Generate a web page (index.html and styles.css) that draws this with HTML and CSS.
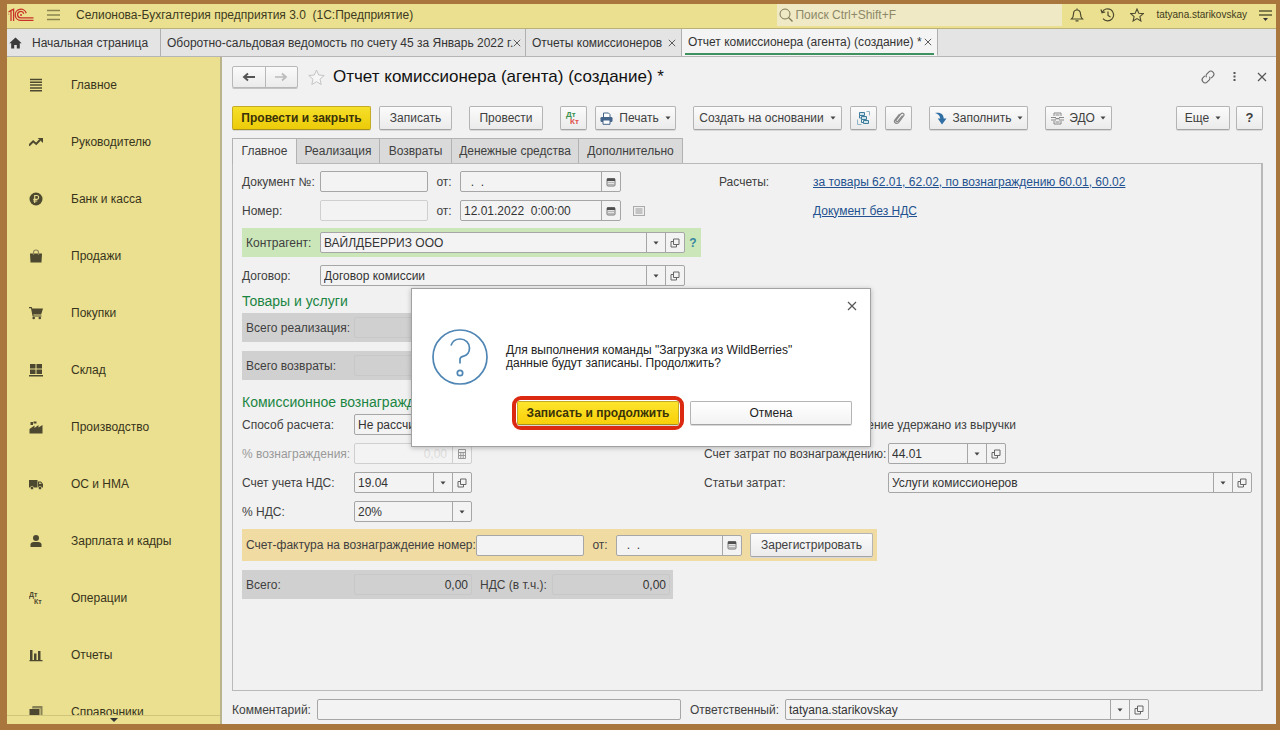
FILE: index.html
```
<!DOCTYPE html>
<html lang="ru">
<head>
<meta charset="utf-8">
<title>Отчет комиссионера (агента) (создание) *</title>
<link rel="stylesheet" href="styles.css">
</head>
<body>
<svg class="sprite" aria-hidden="true">
  <symbol id="i-open" viewBox="0 0 10 10"><path d="M3.500 1H9v5.500H3.500zM3.500 3.500H1V9h5.500V6.500" fill="none" stroke="#666" stroke-width="1"/></symbol>
  <symbol id="i-cal" viewBox="0 0 10 10"><rect x="1" y="1.500" width="8" height="7.500" rx="1" fill="#e4e4e4" stroke="#777"/><path d="M1 1.500h8v2.500H1z" fill="#505050"/><path d="M2.500 5.500h5M2.500 7.500h5" stroke="#888" stroke-dasharray="1 1"/></symbol>
  <symbol id="i-caret" viewBox="0 0 6 4"><path d="M.5.5h5L3 3.500z" fill="#444"/></symbol>
  <symbol id="i-x" viewBox="0 0 10 10"><path d="M1 1l8 8M9 1L1 9" stroke="#555" stroke-width="1.200"/></symbol>
</svg>
<div class="desktop">
<div class="app">
  <header class="topbar">
    <svg class="logo" viewBox="0 0 27 14" role="img" aria-label="1С"><g fill="none" stroke="#c8322a" stroke-width="1.300"><path d="M1.500 4L4 2.400V13M1.500 6.300L2 6M4 2.400L6.600 1.300V13"/><path d="M19.200 5.200A5.600 5.600 0 1 0 14 12.400H26.500"/><path d="M16.800 5.700A3.200 3.200 0 1 0 14 9.900H26.500"/></g><circle cx="14" cy="6.900" r="1" fill="#c8322a"/></svg>
    <button class="bar-btn burger" aria-label="Меню"><svg width="13" height="12" viewBox="0 0 13 12"><path d="M0 1.500h13M0 6h13M0 10.500h13" stroke="#8b8450" stroke-width="1.300"/></svg></button>
    <span class="app-title">Селионова-Бухгалтерия предприятия 3.0&nbsp; (1С:Предприятие)</span>
    <label class="search"><svg width="14" height="14" viewBox="0 0 14 14"><circle cx="6" cy="6" r="5" fill="none" stroke="#7d7856"/><path d="M9.500 9.500l4 4" stroke="#7d7856" stroke-width="1.300"/></svg><input type="text" placeholder="Поиск Ctrl+Shift+F" aria-label="Поиск"></label>
    <button class="bar-btn" aria-label="Уведомления"><svg width="14" height="14" viewBox="0 0 14 14"><path d="M1.500 11h11c-1.500-1.500-2-2.500-2-5 0-2.300-1.300-4-3.500-4S3.500 3.700 3.500 6c0 2.500-.5 3.500-2 5zM7 2V.6M5.500 12.800h3" fill="none" stroke="#4d4a30" stroke-width="1.200"/></svg></button>
    <button class="bar-btn" aria-label="История"><svg width="15" height="14" viewBox="0 0 15 14"><path d="M2.200 4.200A6 6 0 1 1 3 10.700M1 1.500l1 3.200 3.200-.7M8 3.500V7.500l2.500 1.500" fill="none" stroke="#4d4a30" stroke-width="1.200"/></svg></button>
    <button class="bar-btn" aria-label="Избранное"><svg width="14" height="14" viewBox="0 0 14 14"><path d="M7 1l1.800 4.200 4.500.4-3.400 3 1 4.400L7 10.600 3.100 13l1-4.400-3.400-3 4.500-.4z" fill="none" stroke="#4d4a30" stroke-width="1.100"/></svg></button>
    <span class="user">tatyana.starikovskay</span>
    <button class="bar-btn service" aria-label="Сервис"><svg width="13" height="13" viewBox="0 0 13 13"><path d="M0 2h13M0 6h13" stroke="#5d5936" stroke-width="1.300"/><path d="M4 9h5l-2.500 3z" fill="#333"/></svg></button>
  </header>

  <nav class="wintabs">
    <div class="wintab wintab-home"><svg width="13" height="12" viewBox="0 0 13 12"><path d="M6.500.5L.3 6.300h1.900v5.200h3V8h2.600v3.500h3V6.300h1.900z" fill="#3c3c3c"/></svg><a href="#home">Начальная страница</a></div>
    <div class="wintab w-365"><a href="#osv">Оборотно-сальдовая ведомость по счету 45 за Январь 2022 г.</a><button class="close" aria-label="Закрыть"><svg width="8" height="8"><use href="#i-x"/></svg></button></div>
    <div class="wintab w-156"><a href="#reports">Отчеты комиссионеров</a><button class="close" aria-label="Закрыть"><svg width="8" height="8"><use href="#i-x"/></svg></button></div>
    <div class="wintab w-256 active"><a href="#report">Отчет комиссионера (агента) (создание) *</a><button class="close" aria-label="Закрыть"><svg width="8" height="8"><use href="#i-x"/></svg></button></div>
  </nav>

  <div class="body">
    <aside class="sidebar">
      <nav class="sections">
        <a href="#s1"><svg viewBox="0 0 14 14"><path d="M1 1.500h12M1 4.300h12M1 7.100h12M1 9.900h12M1 12.700h12" stroke="#4d4930" stroke-width="1.500"/></svg>Главное</a>
        <a href="#s2"><svg viewBox="0 0 14 14"><path d="M0 10.500L4.200 6.300l3 2.600L11 5" fill="none" stroke="#4d4930" stroke-width="2"/><path d="M8.700 3H14v5z" fill="#4d4930"/></svg>Руководителю</a>
        <a href="#s3"><svg viewBox="0 0 14 14"><circle cx="7" cy="7" r="6.500" fill="#4d4930"/><path d="M5.700 11V3.500h2a1.900 1.900 0 0 1 0 3.900H4.300M4.300 9h4" fill="none" stroke="#ebe08f" stroke-width="1.100"/></svg>Банк и касса</a>
        <a href="#s4"><svg viewBox="0 0 14 14"><path d="M1 4.500h12l-.5 9h-11z" fill="#4d4930"/><path d="M4.500 6V3.500a2.500 2.500 0 0 1 5 0V6" fill="none" stroke="#8a8358" stroke-width="1.100"/></svg>Продажи</a>
        <a href="#s5"><svg viewBox="0 0 14 14"><path d="M0 1h2.700l.6 1.500H14l-1.800 6H4.300l.2 1h8v1H3.600L2 2.200H0z" fill="#4d4930"/><circle cx="4.700" cy="12" r="1.300" fill="#4d4930"/><circle cx="10.800" cy="12" r="1.300" fill="#4d4930"/></svg>Покупки</a>
        <a href="#s6"><svg viewBox="0 0 14 14"><path d="M1 1h5.500v4.500H1zM7.500 1H13v4.500H7.500zM1 6.500h5.500V11H1zM7.500 6.500H13V11H7.500zM0 12h14v1.500H0z" fill="#4d4930"/></svg>Склад</a>
        <a href="#s7"><svg viewBox="0 0 14 14"><path d="M.5 13.500V9l5-3.500V8l4-3v2.500L13.500 5v8.500zM1.500 5V2H4v3zM4.500 1.500h3v2h-3z" fill="#4d4930"/></svg>Производство</a>
        <a href="#s8"><svg viewBox="0 0 14 14"><path d="M0 3h8.500v7.500H0zM9 4.500h3l2 2.500v3.500H9z" fill="#4d4930"/><path d="M10 5.500h1.700l1 1.500H10z" fill="#c7bd78"/><circle cx="3" cy="11" r="1.700" fill="#4d4930" stroke="#ebe08f" stroke-width=".6"/><circle cx="11" cy="11" r="1.700" fill="#4d4930" stroke="#ebe08f" stroke-width=".6"/></svg>ОС и НМА</a>
        <a href="#s9"><svg viewBox="0 0 14 14"><circle cx="7" cy="4" r="3" fill="#4d4930"/><path d="M1.500 13V10.500c0-1.500 1.500-2.500 3-2.500h5c1.500 0 3 1 3 2.500V13z" fill="#4d4930"/></svg>Зарплата и кадры</a>
        <a href="#s10"><svg viewBox="0 0 14 14"><g fill="#4d4930" font-family="Liberation Sans, sans-serif" font-weight="bold" font-size="7"><text x="0" y="6">Дт</text><text x="5" y="13">Кт</text></g></svg>Операции</a>
        <a href="#s11"><svg viewBox="0 0 14 14"><path d="M1 2h2.500v11H1zM5 5.500h2.500V13H5zM9 3h2.500v10H9zM.5 12H13.500v1.300H.5z" fill="#4d4930"/></svg>Отчеты</a>
        <a href="#s12"><svg viewBox="0 0 14 14"><path d="M3.500 1H13.500v10l-2 1V3.500H3z" fill="#8a8358"/><path d="M.5 4H10.500v10H.5z" fill="#4d4930"/></svg>Справочники</a>
      </nav>
      <button class="scroll-down" aria-label="Вниз"><svg width="8" height="4"><path d="M0 0h8L4 4z" fill="#333"/></svg></button>
    </aside>

    <main class="form">
      <div class="titlebar">
        <div class="history"><button aria-label="Назад"><svg width="14" height="10" viewBox="0 0 14 10"><path d="M13 5H3M6 1.500L2 5l4 3.500" fill="none" stroke="#555" stroke-width="1.900"/></svg></button><button aria-label="Вперед" disabled><svg width="14" height="10" viewBox="0 0 14 10"><path d="M1 5h10M8 1.500L12 5 8 8.500" fill="none" stroke="#bbb" stroke-width="1.700"/></svg></button></div>
        <button class="icon-btn fav" aria-label="В избранное"><svg width="17" height="16" viewBox="0 0 17 16"><path d="M8.500 1l2.200 5 5.500.5-4.200 3.700 1.200 5.300-4.700-2.800-4.700 2.800L5 10.200.8 6.500 6.300 6z" fill="#f6f6f6" stroke="#c4c4c4"/></svg></button>
        <h1>Отчет комиссионера (агента) (создание) *</h1>
        <button class="icon-btn" aria-label="Ссылка"><svg width="14" height="14" viewBox="0 0 14 14"><g fill="none" stroke="#666" stroke-width="1.100" transform="rotate(-45 7 7)"><path d="M5.500 4H3a3 3 0 0 0 0 6h2.500a3 3 0 0 0 2.800-2.200M8.500 10H11a3 3 0 0 0 0-6H8.500a3 3 0 0 0-2.800 2.200"/></g></svg></button>
        <button class="icon-btn" aria-label="Еще"><svg width="3" height="11" viewBox="0 0 3 11"><path d="M.5 1h2v2h-2zM.5 4.500h2v2h-2zM.5 8h2v2h-2z" fill="#555"/></svg></button>
        <button class="icon-btn" aria-label="Закрыть"><svg width="10" height="10"><use href="#i-x"/></svg></button>
      </div>

      <div class="toolbar">
        <div class="group">
          <button class="btn primary w-139">Провести и закрыть</button>
          <button class="btn w-73">Записать</button>
        </div>
        <button class="btn w-74">Провести</button>
        <div class="group">
          <button class="btn w-27" aria-label="Проводки"><svg width="17" height="16" viewBox="0 0 17 16"><g font-family="Liberation Sans, sans-serif" font-weight="bold" font-size="8"><text x="1" y="7" fill="#3c9150">Дт</text><text x="5" y="14" fill="#e0504a">Кт</text></g></svg></button>
          <button class="btn w-81"><svg width="13" height="13" viewBox="0 0 13 13"><path d="M3.500 5V1h5L10 2.500V5" fill="#fff" stroke="#44658a"/><rect x=".5" y="5" width="12" height="5" rx="1.200" fill="#44658a"/><path d="M3 8h7v4.300H3z" fill="#fff" stroke="#44658a"/></svg>Печать<svg class="caret"><use href="#i-caret"/></svg></button>
        </div>
        <div class="group">
          <button class="btn w-149">Создать на основании<svg class="caret"><use href="#i-caret"/></svg></button>
          <button class="btn w-27" aria-label="Структура подчиненности"><svg width="13" height="14" viewBox="0 0 13 14"><g fill="#cfe3ec" stroke="#3f7d9c"><path d="M2.500 1.500h5v3h-5zM4.500 5.500h5v3h-5zM6.500 9.500h5v3h-5z"/></g><path d="M2.500 4.500v2.500h2M4.500 8.500v3h2" fill="none" stroke="#3f7d9c"/><path d="M9.500 .5h3v4M.5 8.500v5h4" fill="none" stroke="#8fb3c5"/></svg></button>
          <button class="btn w-27" aria-label="Файлы"><svg width="12" height="14" viewBox="0 0 12 14"><path d="M9.500 4.500L5 10.200c-1 1.200-2.600-.1-1.700-1.300L7.800 3c1.700-2 4.200 0 2.700 2l-4.800 6.300c-2.200 2.600-5.500.1-3.700-2.500L6.500 3" fill="none" stroke="#888" stroke-width="1.200"/></svg></button>
        </div>
        <button class="btn w-99"><svg width="13" height="13" viewBox="0 0 13 13"><path d="M1 1c4.500-.8 8.500.5 8.700 5.500H12.500L8 12.500 3.800 6.500h2.400C6 3.500 4 2 1 1z" fill="#2f6fa3"/></svg>Заполнить<svg class="caret"><use href="#i-caret"/></svg></button>
        <button class="btn w-67 tight"><svg width="13" height="13" viewBox="0 0 13 13"><path d="M3 4V1h7v3M3 9v3h7V9" fill="none" stroke="#888"/><path d="M0 5.500h5M8 5.500h5M0 8h5M8 8h5M4.500 3h4M4.500 6.700h4M4.500 10h4" stroke="#888" stroke-width="1.200"/></svg>ЭДО<svg class="caret"><use href="#i-caret"/></svg></button>
        <div class="group tail">
          <button class="btn w-54">Еще<svg class="caret"><use href="#i-caret"/></svg></button>
          <button class="btn w-27 help">?</button>
        </div>
      </div>

      <div class="tabs" role="tablist">
        <button role="tab" aria-selected="true" class="tab active w-65">Главное</button>
        <button role="tab" class="tab w-83">Реализация</button>
        <button role="tab" class="tab w-72">Возвраты</button>
        <button role="tab" class="tab w-127">Денежные средства</button>
        <button role="tab" class="tab w-104">Дополнительно</button>
      </div>

      <section class="panel">
        <div class="cols">
          <div class="stack">
            <div class="row"><label class="l-top" for="docnum">Документ №:</label><span class="field f-num"><input id="docnum" type="text"></span><label class="l-from" for="docdate">от:</label><span class="field f-date"><input id="docdate" type="text" value="&nbsp; .&nbsp; ."><button aria-label="Календарь"><svg class="ic"><use href="#i-cal"/></svg></button></span></div>
            <div class="row"><label class="l-top" for="num">Номер:</label><span class="field f-num faint"><input id="num" type="text"></span><label class="l-from" for="date">от:</label><span class="field f-date"><input id="date" type="text" value="12.01.2022&nbsp; 0:00:00"><button aria-label="Календарь"><svg class="ic"><use href="#i-cal"/></svg></button></span><svg class="journal" width="12" height="10" viewBox="0 0 12 10"><rect x=".5" y=".5" width="11" height="9" fill="#eee" stroke="#aaa"/><path d="M2.500 3h7M2.500 5h7M2.500 7h7" stroke="#999"/></svg></div>
          </div>
          <div class="stack side-top">
            <div class="row"><span class="l-calc">Расчеты:</span><a class="link" href="#calc">за товары 62.01, 62.02, по вознаграждению 60.01, 60.02</a></div>
            <div class="row"><span class="l-calc"></span><a class="link" href="#nds">Документ без НДС</a></div>
          </div>
        </div>
        <div class="band green"><label class="l-band" for="agent">Контрагент:</label><span class="field f-ref"><input id="agent" type="text" value="ВАЙЛДБЕРРИЗ ООО"><button aria-label="Выбрать"><svg class="caret"><use href="#i-caret"/></svg></button><button aria-label="Открыть"><svg class="ic"><use href="#i-open"/></svg></button></span><a class="hint" href="#hint">?</a></div>
        <div class="row contract"><label class="l-top" for="contract">Договор:</label><span class="field f-ref"><input id="contract" type="text" value="Договор комиссии"><button aria-label="Выбрать"><svg class="caret"><use href="#i-caret"/></svg></button><button aria-label="Открыть"><svg class="ic"><use href="#i-open"/></svg></button></span></div>

        <h2>Товары и услуги</h2>
        <div class="band grey wide"><label class="l-sum" for="s-real">Всего реализация:</label><span class="field f-mid total"><input id="s-real" type="text" readonly></span></div>
        <div class="band grey wide second"><label class="l-sum" for="s-ret">Всего возвраты:</label><span class="field f-mid total"><input id="s-ret" type="text" readonly></span></div>

        <h2 class="reward">Комиссионное вознаграждение</h2>
        <div class="cols">
          <div class="stack reward-left">
            <div class="row"><label class="l-mid" for="method">Способ расчета:</label><span class="field f-method"><select id="method"><option>Не рассчитывается</option></select><span class="cell"><svg class="caret"><use href="#i-caret"/></svg></span></span></div>
            <div class="row off"><label class="l-mid" for="pct">% вознаграждения:</label><span class="field f-mid faint"><input id="pct" class="num" type="text" value="0,00" disabled><button aria-label="Калькулятор" disabled><svg class="ic" viewBox="0 0 10 10"><path d="M1.500.5h7v9h-7zM1.500 3.500h7M3.800 3.500v6M6.200 3.500v6M1.500 6.500h7" fill="none" stroke="#999"/></svg></button></span></div>
            <div class="row"><label class="l-mid" for="acc">Счет учета НДС:</label><span class="field f-mid"><input id="acc" type="text" value="19.04"><button aria-label="Выбрать"><svg class="caret"><use href="#i-caret"/></svg></button><button aria-label="Открыть"><svg class="ic"><use href="#i-open"/></svg></button></span></div>
            <div class="row"><label class="l-mid" for="vat">% НДС:</label><span class="field f-mid"><select id="vat"><option>20%</option></select><span class="cell"><svg class="caret"><use href="#i-caret"/></svg></span></span></div>
          </div>
          <div class="stack reward-right">
            <div class="row"><label class="check"><input type="checkbox">Комиссионное вознаграждение удержано из выручки</label></div>
            <div class="row"><label class="l-cost" for="cost">Счет затрат по вознаграждению:</label><span class="field f-mid"><input id="cost" type="text" value="44.01"><button aria-label="Выбрать"><svg class="caret"><use href="#i-caret"/></svg></button><button aria-label="Открыть"><svg class="ic"><use href="#i-open"/></svg></button></span></div>
            <div class="row"><label class="l-cost" for="item">Статьи затрат:</label><span class="field f-fill"><input id="item" type="text" value="Услуги комиссионеров"><button aria-label="Выбрать"><svg class="caret"><use href="#i-caret"/></svg></button><button aria-label="Открыть"><svg class="ic"><use href="#i-open"/></svg></button></span></div>
          </div>
        </div>

        <div class="band gold"><label class="l-inv" for="inv">Счет-фактура на вознаграждение номер:</label><span class="field f-num"><input id="inv" type="text"></span><label class="l-from" for="invdate">от:</label><span class="field f-invdate"><input id="invdate" type="text" value="&nbsp; .&nbsp; ."><button aria-label="Календарь"><svg class="ic"><use href="#i-cal"/></svg></button></span><button class="btn register">Зарегистрировать</button></div>
        <div class="band grey totals"><label class="l-sum" for="sum">Всего:</label><span class="field f-mid total"><input id="sum" class="num" type="text" value="0,00" readonly></span><label class="l-vat" for="vatsum">НДС (в т.ч.):</label><span class="field f-mid total"><input id="vatsum" class="num" type="text" value="0,00" readonly></span></div>
      </section>

      <footer class="footer">
        <label class="l-comment" for="comment">Комментарий:</label><span class="field f-comment"><input id="comment" type="text"></span>
        <label class="l-resp" for="resp">Ответственный:</label><span class="field f-comment"><input id="resp" type="text" value="tatyana.starikovskay"><button aria-label="Выбрать"><svg class="caret"><use href="#i-caret"/></svg></button><button aria-label="Открыть"><svg class="ic"><use href="#i-open"/></svg></button></span>
      </footer>
    </main>
  </div>

  <div class="overlay">
    <div class="dialog" role="dialog" aria-modal="true">
      <button class="icon-btn dialog-close" aria-label="Закрыть"><svg width="10" height="10"><use href="#i-x"/></svg></button>
      <div class="dialog-body">
        <svg width="56" height="56" viewBox="0 0 56 56"><g fill="none" stroke="#4f86b4" stroke-width="1.700"><circle cx="28" cy="28" r="27"/><path d="M19 16.500c1.500-4.500 5-6.500 9-6.500 5.500 0 9.500 3.700 9.500 9 0 4.500-3 7.500-6.500 8.300-2 .5-3 1-3 3V34.500"/><circle cx="28" cy="44" r="2.700"/></g></svg>
        <p>Для выполнения команды "Загрузка из WildBerries"<br>данные будут записаны. Продолжить?</p>
      </div>
      <div class="dialog-actions">
        <span class="mark"><button class="btn primary">Записать и продолжить</button></span>
        <button class="btn cancel">Отмена</button>
      </div>
    </div>
  </div>
</div>
</div>
</body>
</html>
```
FILE: styles.css
```
* { box-sizing: border-box; }
body { margin: 0; font: 12px/14px "Liberation Sans", Arial, sans-serif; color: #404040; }
button, input, select { font: inherit; color: inherit; margin: 0; }
button { padding: 0; border: 0; background: none; display: flex; align-items: center; justify-content: center; }
h1, h2, p { margin: 0; font-weight: normal; }
.sprite { display: none; }
svg { flex: none; }
.caret { width: 6px; height: 4px; }
.ic { width: 10px; height: 10px; }

.desktop { height: 100vh; padding: 4px 4px 6px 7px; background: #a9763d; }
.app { height: 100%; position: relative; display: flex; flex-direction: column; background: #f1f1f1; overflow: hidden; }

.topbar { flex: none; height: 25px; display: flex; align-items: center; background: #ebe08f; border-bottom: 1px solid #b9b07a; padding-bottom: 2px; }
.logo { width: 27px; height: 14px; }
.bar-btn { width: 30px; height: 22px; }
.burger { width: 13px; margin: 0 16px 0 13px; }
.app-title { flex: 1; color: #3d3a20; white-space: nowrap; }
.search { width: 285px; height: 22px; display: flex; align-items: center; gap: 2px; padding-left: 2px; background: #f0e9c5; }
.search input { flex: 1; min-width: 0; border: 0; padding: 0; background: none; }
.search input::placeholder { color: #8c8868; opacity: 1; }
.user { margin-left: 4px; color: #3d3a20; font-size: 10px; }
.service { width: 13px; margin: 0 4px 0 12px; }

.wintabs { flex: none; height: 28px; display: flex; background: #e4e4e4; border-bottom: 1px solid #b5b5b5; }
.wintab { display: flex; align-items: center; justify-content: space-between; padding: 0 5px 0 6px; border-right: 1px solid #b0b0b0; }
.wintab a { color: #333; text-decoration: none; white-space: nowrap; }
.wintab-home { width: 154px; justify-content: flex-start; padding: 0 2px; gap: 10px; }
.wintab.active { background: linear-gradient(#3f9160, #3f9160) 3px 100% / calc(100% - 6px) 2px no-repeat #f4f4f4; border-bottom: 1px solid #f4f4f4; }
.w-156 { width: 156px; } .w-256 { width: 256px; } .w-365 { width: 365px; }

.body { flex: 1; min-height: 0; display: flex; }
.sidebar { flex: none; width: 215px; display: flex; flex-direction: column; background: #ebe08f; border-right: 2px solid #b9b48c; }
.sections { flex: 1; min-height: 0; overflow: hidden; }
.sections a { height: 57px; display: flex; align-items: center; gap: 28px; padding: 0 0 2px 22px; color: #38341c; text-decoration: none; }
.sections svg { width: 14px; height: 14px; }
.scroll-down { flex: none; width: 100%; height: 9px; padding-bottom: 2px; border-top: 1px solid #cfc57c; align-items: flex-end; }

.form { flex: 1; min-width: 0; display: flex; flex-direction: column; padding: 8px 13px 4px 10px; }
.titlebar { display: flex; align-items: center; height: 23px; }
.history { display: flex; width: 66px; height: 22px; border: 1px solid #b8b8b8; border-radius: 2px; background: linear-gradient(#fafafa, #ebebeb); box-shadow: 0 1px 0 #c4c4c4; }
.history button { flex: 1; }
.history button + button { border-left: 1px solid #b8b8b8; }
.icon-btn { width: 27px; height: 20px; }
.fav { width: 17px; margin: 0 8px 0 10px; }
h1 { flex: 1; font-size: 17px; line-height: 20px; color: #111; }
.titlebar .icon-btn:last-child { margin-right: -12px; }

.toolbar { display: flex; gap: 17px; margin-top: 18px; }
.group { display: flex; gap: 8px; }
.tail { margin-left: auto; gap: 6px; }
.btn { height: 24px; gap: 6px; white-space: nowrap; border: 1px solid #b4b4b4; border-bottom-color: #a4a4a4; border-radius: 2px; background: linear-gradient(#fbfbfb, #ebebeb); box-shadow: 0 1px 0 #d8d8d8; }
.primary { font-weight: bold; color: #3a3208; background: linear-gradient(#f6e02a, #eccb09); border-color: #c4ab26; border-bottom-color: #a8901a; }
.help { font-weight: bold; font-size: 13px; }
.tight { gap: 5px; }
.w-27 { width: 27px; } .w-54 { width: 54px; } .w-65 { width: 65px; } .w-67 { width: 67px; }
.w-72 { width: 72px; } .w-73 { width: 73px; } .w-74 { width: 74px; } .w-81 { width: 81px; }
.w-83 { width: 83px; } .w-99 { width: 99px; } .w-104 { width: 104px; } .w-127 { width: 127px; }
.w-139 { width: 139px; } .w-149 { width: 149px; }

.tabs { display: flex; margin-top: 8px; }
.tab { height: 25px; background: #dadada; border: 1px solid #b2b2b2; border-width: 1px 1px 0 0; }
.tab.active { height: 26px; margin-bottom: -1px; padding-bottom: 2px; position: relative; background: #f1f1f1; border-left-width: 1px; }

.panel { flex: 1; min-height: 0; border: 1px solid #b9b9b9; border-right-width: 2px; padding: 7px 9px 0; }
.cols { display: flex; }
.stack { display: flex; flex-direction: column; gap: 8px; }
.row { display: flex; align-items: center; height: 21px; white-space: nowrap; }
.side-top { margin-left: 74px; }
.l-calc { width: 94px; }
.link { color: #24518f; }
.l-top { width: 78px; }
.l-from { width: 32px; text-align: center; }
.l-band { width: 74px; }
.l-mid { width: 112px; }
.l-sum { width: 108px; }
.l-cost { width: 184px; }
.l-inv { width: 230px; }
.l-vat { width: 80px; padding-left: 8px; }
.journal { margin-left: 12px; }

.field { display: flex; height: 21px; border: 1px solid #a6a6a6; border-radius: 2px; background: #f3f3f3; }
.field input, .field select { flex: 1; min-width: 0; border: 0; padding: 0 3px; background: none; appearance: none; color: #333; }
.field button, .cell { flex: none; width: 19px; border-left: 1px solid #a6a6a6; display: flex; align-items: center; justify-content: center; }
.field .num { text-align: right; }
.faint { border-color: #cfcfcf; }
.faint button { border-color: #cfcfcf; }
.faint .num { color: #dcdcdc; padding-right: 5px; }
.off { color: #999; }
.total { background: none; border-color: #c8c8c8; }
.f-num { width: 108px; }
.f-date { width: 161px; }
.f-ref { width: 365px; }
.f-mid { width: 118px; }
.f-method { width: 300px; }
.f-fill { flex: 1; }
.f-invdate { width: 126px; }

.band { display: flex; align-items: center; width: max-content; padding: 4px; white-space: nowrap; }
.green { margin-top: 7px; background: #cbe6b9; }
.hint { width: 16px; margin-right: -4px; text-align: center; font-weight: bold; text-decoration: none; color: #3584a0; }
.contract { margin-top: 8px; }
.grey { background: #d0d0d0; }
.wide { width: 431px; }
.second { margin-top: 9px; }
h2 { margin: 7px 0 3px; font-size: 14px; line-height: 17px; color: #1a8542; }
.reward { margin-top: 14px; }
.reward-left { width: 462px; }
.reward-right { flex: 1; }
.check { display: flex; align-items: center; gap: 2px; }
.check input { width: 13px; height: 13px; margin: 0; }
.gold { margin-top: 7px; background: #f0dba2; }
.register { width: 123px; margin-left: 8px; }
.totals { margin-top: 9px; padding-right: 3px; }

.footer { display: flex; align-items: center; margin-top: 8px; }
.l-comment { width: 85px; }
.f-comment { width: 364px; }
.l-resp { width: 104px; padding-left: 9px; }

.overlay { position: absolute; inset: 0; display: flex; align-items: center; justify-content: center; padding: 6px 1px 0 0; }
.dialog { width: 460px; padding: 0 18px 16px 20px; background: #fff; border: 1px solid #a2a2a2; box-shadow: 0 1px 5px rgba(0, 0, 0, .25); color: #222; }
.dialog-close { height: 34px; width: 20px; margin-left: auto; margin-right: -10px; }
.dialog-body { display: flex; align-items: center; gap: 18px; margin-top: 6px; }
.dialog-body p { line-height: 13px; }
.dialog-actions { display: flex; align-items: center; gap: 6px; margin: 11px 0 0 80px; }
.mark { flex: none; padding: 1px; border: 4px solid #dc2a12; border-radius: 9px; }
.mark .btn { width: 162px; background: linear-gradient(#fde52c, #f9cf0a); }
.cancel { flex: 1; background: linear-gradient(#fff, #f3f3f3); }
```
